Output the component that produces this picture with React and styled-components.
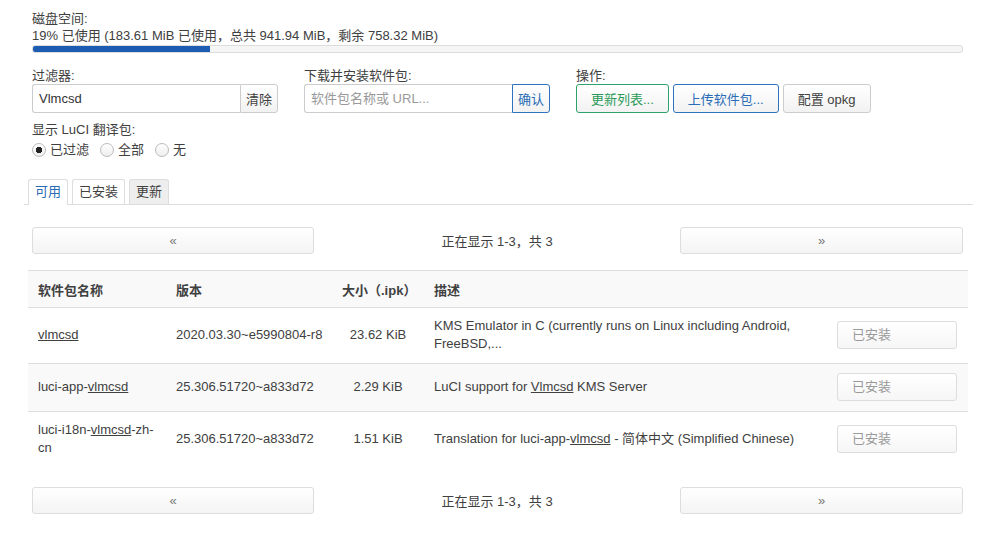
import styled, { createGlobalStyle } from 'styled-components';

const GlobalStyle = createGlobalStyle`
  html, body {
    margin: 0;
    padding: 0;
    background: #fff;
  }
  body {
    font-family: "Liberation Sans", Arial, "Noto Sans CJK SC", sans-serif;
    font-size: 13px;
    color: #404040;
  }
`;

const packages = [
  {
    name: ['', 'vlmcsd', ''],
    version: '2020.03.30~e5990804-r8',
    size: '23.62 KiB',
    desc: ['KMS Emulator in C (currently runs on Linux including Android, FreeBSD,...'],
  },
  {
    name: ['luci-app-', 'vlmcsd', ''],
    version: '25.306.51720~a833d72',
    size: '2.29 KiB',
    desc: ['LuCI support for ', 'Vlmcsd', ' KMS Server'],
  },
  {
    name: ['luci-i18n-', 'vlmcsd', '-zh-cn'],
    version: '25.306.51720~a833d72',
    size: '1.51 KiB',
    desc: ['Translation for luci-app-', 'vlmcsd', ' - 简体中文 (Simplified Chinese)'],
  },
];

export default function App() {
  return (
    <>
      <GlobalStyle />
      <Page>
        <Section>
          <Label>磁盘空间:</Label>
          <UsageText>19% 已使用 (183.61 MiB 已使用，总共 941.94 MiB，剩余 758.32 MiB)</UsageText>
          <Progress>
            <ProgressFill style={{ width: '19%' }} />
          </Progress>
        </Section>

        <Controls>
          <Field>
            <Label>过滤器:</Label>
            <InputGroup>
              <TextInput defaultValue="Vlmcsd" />
              <AddonButton>清除</AddonButton>
            </InputGroup>
          </Field>
          <Field>
            <Label>下载并安装软件包:</Label>
            <InputGroup>
              <TextInput placeholder="软件包名称或 URL..." />
              <AddonButton variant="primary">确认</AddonButton>
            </InputGroup>
          </Field>
          <Field>
            <Label>操作:</Label>
            <ButtonRow>
              <Button variant="positive">更新列表...</Button>
              <Button variant="primary">上传软件包...</Button>
              <Button>配置 opkg</Button>
            </ButtonRow>
          </Field>
        </Controls>

        <Section spaced>
          <Label>显示 LuCI 翻译包:</Label>
          <RadioRow>
            <RadioItem>
              <Radio checked />
              已过滤
            </RadioItem>
            <RadioItem>
              <Radio />
              全部
            </RadioItem>
            <RadioItem>
              <Radio />
              无
            </RadioItem>
          </RadioRow>
        </Section>

        <Tabs>
          <Tab active>可用</Tab>
          <Tab>已安装</Tab>
          <Tab muted>更新</Tab>
        </Tabs>

        <Pager>
          <PagerButton>«</PagerButton>
          <PagerText>正在显示 1-3，共 3</PagerText>
          <PagerButton>»</PagerButton>
        </Pager>

        <Table>
          <thead>
            <tr>
              <Th width="138px">软件包名称</Th>
              <Th width="166px">版本</Th>
              <Th width="92px" center>大小（.ipk）</Th>
              <Th>描述</Th>
              <Th width="141px" />
            </tr>
          </thead>
          <tbody>
            {packages.map((p, i) => (
              <Row key={i} striped={i % 2 === 1}>
                <Td>
                  {p.name[0]}
                  <Link>{p.name[1]}</Link>
                  {p.name[2]}
                </Td>
                <Td nowrap>{p.version}</Td>
                <Td center>{p.size}</Td>
                <Td>
                  {p.desc[0]}
                  {p.desc[1] && <Link>{p.desc[1]}</Link>}
                  {p.desc[2]}
                </Td>
                <Td>
                  <InstalledButton>已安装</InstalledButton>
                </Td>
              </Row>
            ))}
          </tbody>
        </Table>

        <Pager bottom>
          <PagerButton>«</PagerButton>
          <PagerText>正在显示 1-3，共 3</PagerText>
          <PagerButton>»</PagerButton>
        </Pager>
      </Page>
    </>
  );
}

const Page = styled.div`
  width: 940px;
  padding: 10px 0 0 28px;
`;

const Section = styled.div`
  padding: 0 5px 0 4px;
  margin-top: ${(p) => (p.spaced ? '8px' : '0')};
`;

const Label = styled.div`
  line-height: 17px;
  color: #404040;
`;

const UsageText = styled.div`
  line-height: 18px;
`;

const Progress = styled.div`
  height: 6px;
  border: 1px solid #ddd;
  border-radius: 3px;
  background: #f5f5f5;
  overflow: hidden;
`;

const ProgressFill = styled.div`
  height: 100%;
  background: #1c5db3;
`;

const Controls = styled.div`
  display: flex;
  gap: 26px;
  padding: 14px 4px 0;
`;

const Field = styled.div`
  display: flex;
  flex-direction: column;
`;

const InputGroup = styled.div`
  display: flex;
  height: 29px;
`;

const TextInput = styled.input`
  box-sizing: border-box;
  width: 208px;
  height: 29px;
  padding: 0 6px;
  border: 1px solid #ccc;
  border-right: none;
  border-radius: 3px 0 0 3px;
  font: inherit;
  font-size: 13px;
  color: #333;
  outline: none;

  &::placeholder {
    color: #999;
  }
`;

const buttonColors = {
  positive: { border: '#2ba36a', color: '#2b9a58' },
  primary: { border: '#2f72bd', color: '#2a6cb6' },
  default: { border: '#ccc', color: '#404040' },
};

const AddonButton = styled.button`
  box-sizing: border-box;
  width: 38px;
  height: 29px;
  padding: 0;
  border: 1px solid ${(p) => buttonColors[p.variant || 'default'].border};
  border-radius: 0 3px 3px 0;
  background: linear-gradient(#fff, #f2f2f2);
  color: ${(p) => buttonColors[p.variant || 'default'].color};
  font: inherit;
  font-size: 13px;
`;

const ButtonRow = styled.div`
  display: flex;
  gap: 4px;
`;

const Button = styled.button`
  box-sizing: border-box;
  height: 29px;
  padding: 0 14px;
  border: 1px solid ${(p) => buttonColors[p.variant || 'default'].border};
  border-radius: 3px;
  background: linear-gradient(#fff, #f2f2f2);
  color: ${(p) => buttonColors[p.variant || 'default'].color};
  font: inherit;
  font-size: 13px;
`;

const RadioRow = styled.div`
  display: flex;
  gap: 11px;
  margin-top: 3px;
`;

const RadioItem = styled.label`
  display: flex;
  align-items: center;
  gap: 4px;
  line-height: 18px;
`;

const Radio = styled.span`
  box-sizing: border-box;
  width: 14px;
  height: 14px;
  border-radius: 50%;
  border: 1px solid #bbb;
  background: ${(p) =>
    p.checked
      ? 'radial-gradient(circle, #222 0 3px, transparent 3.5px), linear-gradient(#fff, #eee)'
      : 'linear-gradient(#fff, #eee)'};
`;

const Tabs = styled.div`
  display: flex;
  gap: 4px;
  margin: 20px 0 0 -4px;
  padding-left: 4px;
  width: 945px;
  border-bottom: 1px solid #ddd;
`;

const Tab = styled.div`
  box-sizing: border-box;
  padding: 0 6px;
  line-height: 24px;
  border: 1px solid #ddd;
  border-bottom: none;
  border-radius: 3px 3px 0 0;
  margin-bottom: ${(p) => (p.active ? '-1px' : '0')};
  background: ${(p) => (p.muted ? '#eee' : '#fff')};
  color: ${(p) => (p.active ? '#2a6cb6' : '#404040')};
  height: ${(p) => (p.active ? '26px' : '25px')};
`;

const Pager = styled.div`
  display: grid;
  grid-template-columns: 282px 1fr 283px;
  align-items: center;
  padding: 0 5px 0 4px;
  margin-top: ${(p) => (p.bottom ? '20px' : '22px')};
`;

const PagerButton = styled.button`
  height: 27px;
  border: 1px solid #ddd;
  border-radius: 3px;
  background: linear-gradient(#fff, #f4f4f4);
  color: #777;
  font: inherit;
  font-size: 13px;
`;

const PagerText = styled.div`
  text-align: center;
`;

const Table = styled.table`
  width: 940px;
  margin-top: 16px;
  border-collapse: collapse;
  table-layout: fixed;
`;

const Th = styled.th`
  width: ${(p) => p.width || 'auto'};
  height: 37px;
  box-sizing: border-box;
  padding: 0 10px;
  text-align: ${(p) => (p.center ? 'center' : 'left')};
  font-weight: bold;
  color: #404040;
  background: #f9f9f9;
  border-top: 1px solid #ddd;
  border-bottom: 1px solid #ddd;
`;

const Row = styled.tr`
  background: ${(p) => (p.striped ? '#f9f9f9' : '#fff')};
  border-bottom: 1px solid #ddd;

  &:last-child {
    border-bottom: none;
  }
`;

const Td = styled.td`
  padding: 9px 10px 10px;
  line-height: 18px;
  vertical-align: middle;
  white-space: ${(p) => (p.nowrap ? 'nowrap' : 'normal')};
  text-align: ${(p) => (p.center ? 'center' : 'left')};
  color: #404040;
`;

const Link = styled.span`
  text-decoration: underline;
  color: #404040;
`;

const InstalledButton = styled.button`
  box-sizing: border-box;
  width: 120px;
  height: 28px;
  padding: 0 14px;
  text-align: left;
  border: 1px solid #ddd;
  border-radius: 3px;
  background: linear-gradient(#fff, #f6f6f6);
  color: #999;
  font: inherit;
  font-size: 13px;
`;
